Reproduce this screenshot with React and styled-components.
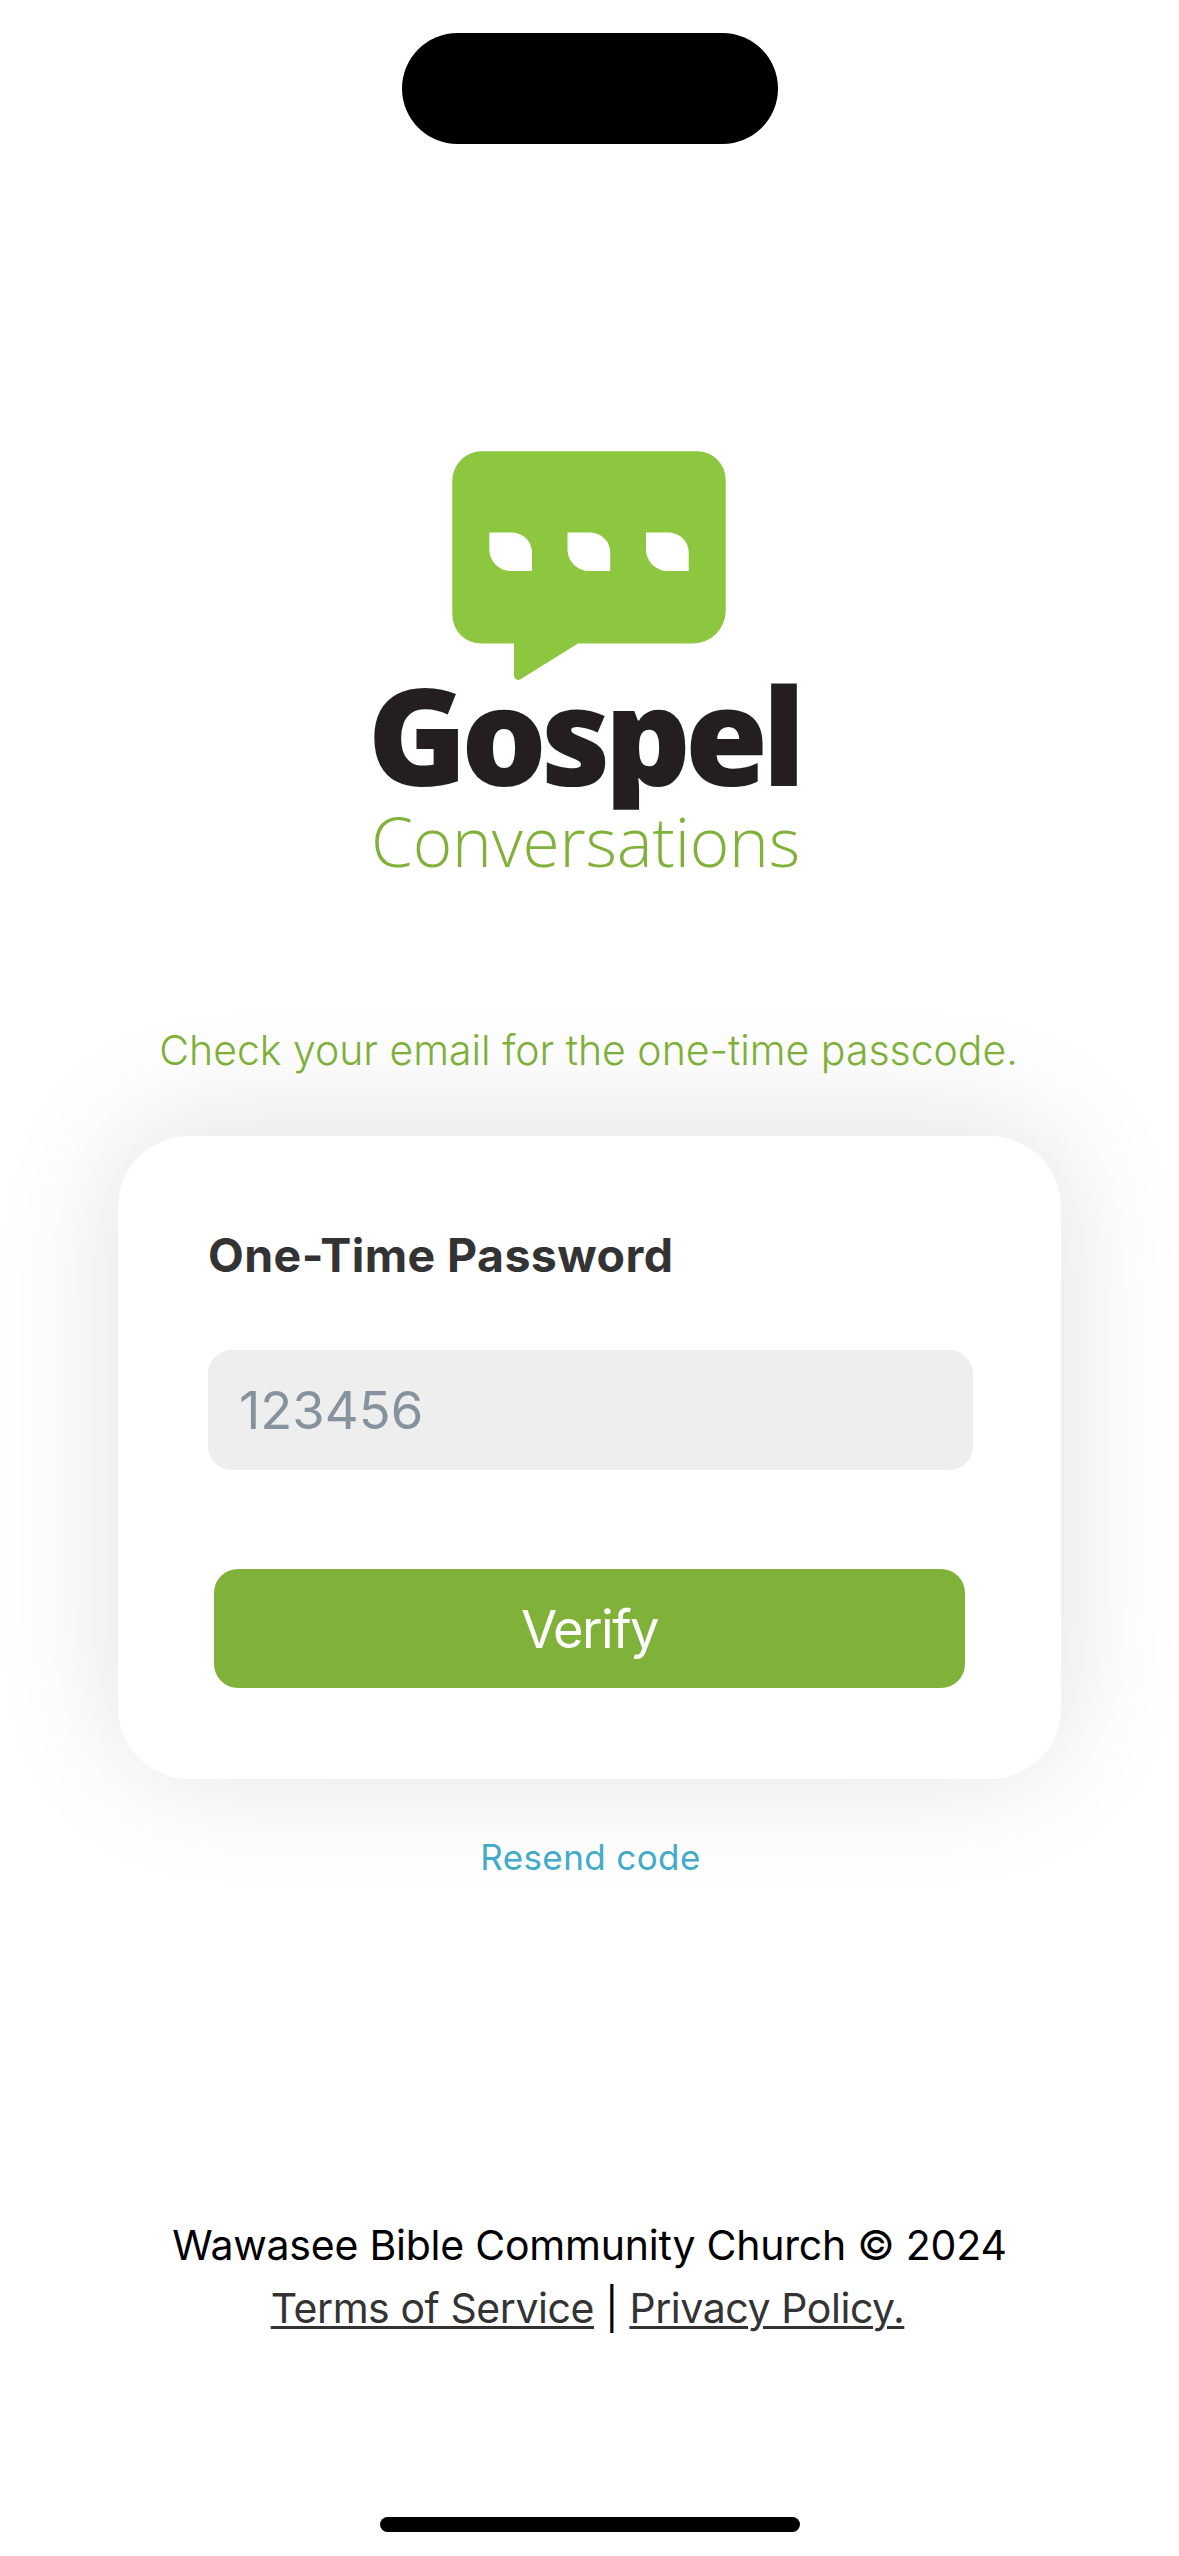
import React from "react";
import styled, { createGlobalStyle } from "styled-components";

const GlobalStyle = createGlobalStyle`
  * {
    box-sizing: border-box;
  }
  body {
    margin: 0;
    background-color: #fff;
    font-family: Inter, "Liberation Sans", sans-serif;
  }
`;

const Logo = () => (
  <LogoSvg viewBox="0 0 440 440" role="img">
    {/* the "p" has a cropped tail */}
    <clipPath id="wordmark">
      <rect x="-10" y="230" width="460" height="139.700" />
    </clipPath>
    <path
      fill="#8dc63f"
      d="M112.500 11.300H327.500A28.500 28.500 0 0 1 355.700 39.800V171.500A33 33 0 0 1 323 203.600H208L150.500 239.300C147.500 241 144 239 144 235.500V203.600H111.500A29 29 0 0 1 82.300 174.500V40.300A29.500 29.500 0 0 1 112.500 11.300Z"
    />
    {[119.3, 197.5, 276].map((x) => (
      <path
        key={x}
        fill="#fff"
        d={`M${x} 92.600h23a20 20 0 0 1 19.700 20v18.400h-21a21.500 21.500 0 0 1 -21.700 -21.500z`}
      />
    ))}
    <g clipPath="url(#wordmark)">
      <Gospel x="-2.500" y="345.700">
        Gospel
      </Gospel>
    </g>
    <Conversations x="1" y="426.700">
      Conversations
    </Conversations>
  </LogoSvg>
);

const App = () => {
  const links = ["Terms of Service", "Privacy Policy."];

  return (
    <Screen>
      <GlobalStyle />
      <Island />
      <Logo />
      <Message>Check your email for the one-time passcode.</Message>
      <Card>
        <Label htmlFor="otp">One-Time Password</Label>
        <Input id="otp" placeholder="123456" />
        <Verify>Verify</Verify>
      </Card>
      <Resend>Resend code</Resend>
      <Footer>
        <Church>Wawasee Bible Community Church © 2024</Church>
        <Links>
          <a>{links[0]}</a> | <a>{links[1]}</a>
        </Links>
      </Footer>
      <HomeBar />
    </Screen>
  );
};

const Screen = styled.main`
  display: flex;
  flex-direction: column;
  align-items: center;
  width: 1179px;
  height: 2556px;
  padding: 33px 0 24px;
  overflow: hidden;
`;
const Island = styled.div`
  flex: none;
  width: 376px;
  height: 111px;
  border-radius: 56px;
  background-color: #000;
`;
const LogoSvg = styled.svg`
  flex: none;
  width: 440px;
  height: 440px;
  margin-top: 296px;
  /* the artwork sits slightly right inside its box */
  margin-left: 1px;
  overflow: visible;
  font-family: "Open Sans", sans-serif;
`;
const Gospel = styled.text`
  font-size: 134.600px;
  font-weight: 800;
  letter-spacing: -6px;
  fill: #231f20;
`;
const Conversations = styled.text`
  font-size: 67.500px;
  font-weight: 300;
  letter-spacing: -0.200px;
  fill: #80b239;
`;
const Message = styled.p`
  flex: none;
  margin: 145px 2px 0 0;
  line-height: 50px;
  font-size: 41px;
  font-weight: 300;
  letter-spacing: -0.020px;
  color: #80b239;
  white-space: nowrap;
`;
const Card = styled.section`
  flex: none;
  display: flex;
  flex-direction: column;
  width: 943px;
  height: 643px;
  margin-top: 61px;
  padding: 91px 88px 0 90px;
  border-radius: 71px;
  background-color: #fff;
  box-shadow: 0 -9px 130px rgba(0, 0, 0, 0.12);
`;
const Label = styled.label`
  line-height: 56px;
  font-size: 46.500px;
  font-weight: 700;
  letter-spacing: 0.400px;
  color: #333;
`;
const Input = styled.input`
  height: 120px;
  margin-top: 67px;
  padding: 0 31px;
  border: none;
  border-radius: 24px;
  background-color: #eee;
  font-family: inherit;
  font-size: 52.500px;
  &::placeholder {
    color: #86939e;
    opacity: 1;
  }
`;
const Verify = styled.button`
  height: 119px;
  margin: 99px 8px 0 6px;
  border: none;
  border-radius: 24px;
  background-color: #80b239;
  color: #fff;
  font-family: inherit;
  font-size: 52.500px;
  letter-spacing: -1.600px;
`;
const Resend = styled.a`
  margin: 57px 0 0 2px;
  line-height: 42px;
  font-size: 35px;
  letter-spacing: 0.400px;
  color: #42abc9;
`;
const Footer = styled.footer`
  margin-top: 336px;
  text-align: center;
  line-height: 63px;
  font-size: 41px;
  color: #000;
`;
const Church = styled.div`
  letter-spacing: -0.230px;
  white-space: nowrap;
`;
const Links = styled.div`
  padding-right: 4px;
  letter-spacing: -0.430px;
  a {
    color: #333;
    text-decoration: underline;
    text-decoration-thickness: 3px;
    text-underline-offset: 3px;
  }
`;
const HomeBar = styled.div`
  flex: none;
  width: 420px;
  height: 15px;
  margin-top: auto;
  border-radius: 8px;
  background-color: #000;
`;

export default App;
